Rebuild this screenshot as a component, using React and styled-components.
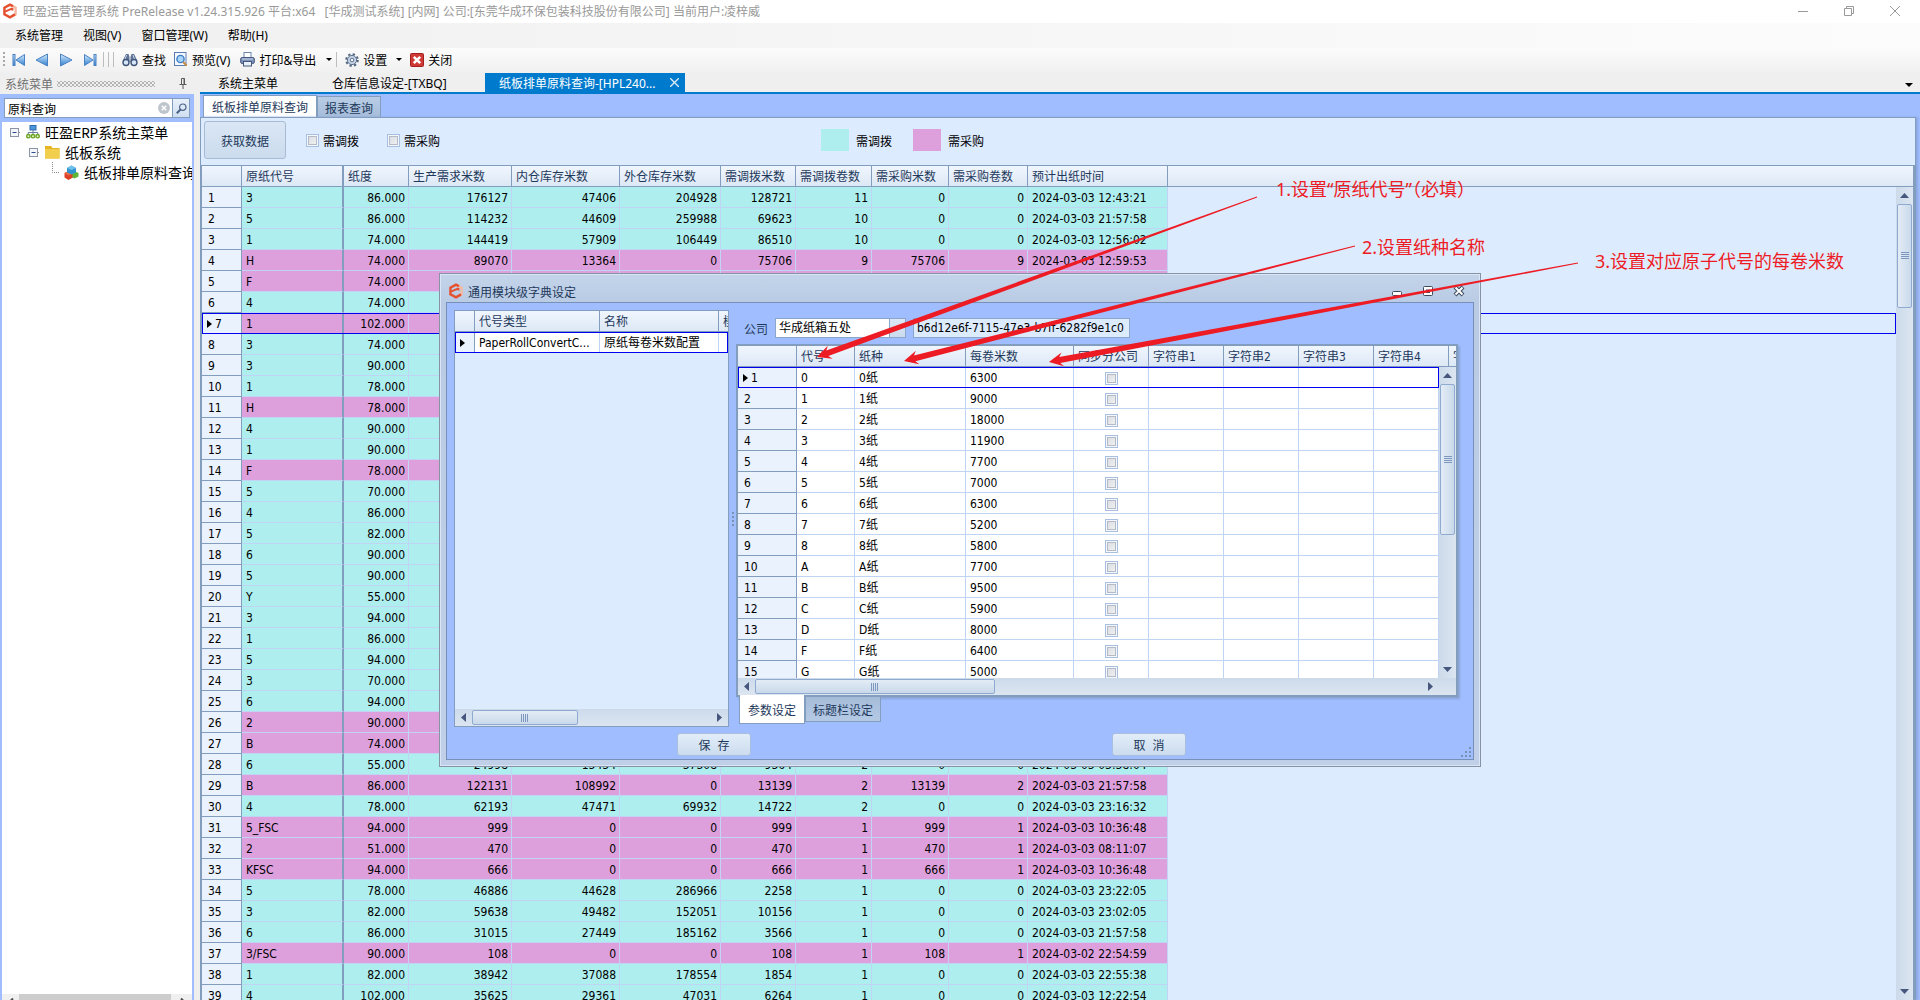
import React, { useState } from 'react'
import styled, { createGlobalStyle, css } from 'styled-components'

const GlobalStyle = createGlobalStyle`
  * {
    box-sizing: border-box;
  }
  body {
    margin: 0;
    overflow: hidden;
  }
  body, button, input, select {
    font-family: 'DejaVu Sans Condensed', 'Noto Sans CJK SC', sans-serif;
    font-size: 12px;
    color: #000;
  }
  button {
    padding: 0;
    border: 0;
    background: none;
  }
`

const colors = {
  frame: '#a0beff',
  panel: '#ddebff',
  line: '#839dbe',
  cellLine: '#c0d4f4',
  ink: '#1e395b',
  focus: '#0000f0',
  accent: '#007acc',
  transfer: '#afeeee',
  purchase: '#dda0dd',
  note: '#ed1c24'
}

const uiFont = "'Noto Sans', 'Noto Sans CJK SC', sans-serif"

/* ---------- shell ---------- */

const Window = styled.div`
  position: relative;
  display: flex;
  flex-direction: column;
  height: 100vh;
  overflow: hidden;
  background: #efefef;
`

const TitleBar = styled.header`
  display: flex;
  align-items: center;
  height: 23px;
  padding: 0 2px 2px 3px;
  background: #fff;
  color: #999;
  font-family: ${uiFont};
  white-space: pre;
`

const TitleText = styled.span`
  flex: 1;
  margin-left: 6px;
`

const CaptionButton = styled.button`
  width: 46px;
  height: 21px;
  display: flex;
  align-items: center;
  justify-content: center;
`

const MenuBar = styled.nav`
  display: flex;
  align-items: center;
  gap: 20px;
  height: 25px;
  padding: 0 0 2px 15px;
  background: linear-gradient(90deg, #f0f0f0, #fcfcfc);
`

const MenuItem = styled.button`
  font-family: ${uiFont};
`

const ToolBar = styled.div`
  display: flex;
  align-items: center;
  height: 25px;
  padding: 0 0 2px 3px;
  background: linear-gradient(#fcfcfc, #f0f0f0);
`

const ToolGrip = styled.span`
  width: 2px;
  height: 16px;
  margin-right: 3px;
  background: repeating-linear-gradient(#a8a8a8 0 2px, transparent 2px 4px);
`

const ToolButton = styled.button`
  display: flex;
  align-items: center;
  gap: 4px;
  height: 22px;
  padding: 0 4px;
  margin-right: ${(props) => props.$gap || 0}px;
  font-family: ${uiFont};
  white-space: nowrap;
`

const ToolSeparator = styled.span`
  width: 1px;
  height: 15px;
  margin-right: 4px;
  background: #bdbdbd;
`

const Main = styled.div`
  flex: 1;
  display: flex;
  min-height: 0;
`

/* ---------- side panel ---------- */

const SidePanel = styled.aside`
  display: flex;
  flex-direction: column;
  width: 194px;
  margin-right: 6px;
`

const SideHeader = styled.div`
  display: flex;
  align-items: center;
  gap: 4px;
  height: 21px;
  padding: 0 7px 0 5px;
  color: #717171;
  font-family: ${uiFont};
`

const SideDots = styled.span`
  width: 98px;
  height: 6px;
  margin-right: 20px;
  background-image: radial-gradient(#b4b4b4 30%, transparent 34%), radial-gradient(#b4b4b4 30%, transparent 34%);
  background-size: 4px 4px;
  background-position: 0 0, 2px 2px;
`

const SideBody = styled.div`
  flex: 1;
  display: flex;
  flex-direction: column;
  min-height: 0;
  padding: 4px 2px 0;
  background: ${colors.frame};
`

const SearchRow = styled.div`
  display: flex;
  height: 20px;
  margin: 0 2px 4px;
  border: 1px solid ${colors.line};
  background: #fff;
`

const SearchInput = styled.input`
  flex: 1;
  min-width: 0;
  border: 0;
  outline: 0;
  padding: 0 3px;
`

const IconButton = styled.button`
  display: flex;
  align-items: center;
  justify-content: center;
  width: 17px;
`

const SearchButton = styled(IconButton)`
  border-left: 1px solid ${colors.line};
  background: linear-gradient(#e8f1fb, #cfdff0);
`

const Tree = styled.ul`
  flex: 1;
  margin: 0;
  padding: 0;
  list-style: none;
  overflow: hidden;
  background: #fff;
  font-family: 'Liberation Mono', 'Noto Sans CJK SC', monospace;
  font-size: 14px;
`

const TreeItem = styled.li`
  display: flex;
  align-items: center;
  gap: 5px;
  height: 20px;
  padding-left: ${(props) => props.$level * 19 + 6}px;
  white-space: nowrap;

  svg {
    flex: none;
  }
`

const NativeScroll = styled.div`
  display: flex;
  justify-content: space-between;
  flex: none;
  height: 17px;
  margin-bottom: -11px;
  padding: 0 4px;
  background: linear-gradient(#cdcdcd, #cdcdcd) 17px 0 / 152px 17px no-repeat #f0f0f0;
`

/* ---------- documents ---------- */

const Documents = styled.main`
  flex: 1;
  display: flex;
  flex-direction: column;
  min-width: 0;
`

const DocStrip = styled.div`
  display: flex;
  height: 21px;
  padding-left: 4px;
  border-bottom: 2px solid ${colors.accent};
`

const DocTab = styled.button`
  display: flex;
  align-items: center;
  justify-content: space-between;
  width: ${(props) => props.$width}px;
  padding: 0 6px 0 14px;
  font-family: ${uiFont};
  white-space: nowrap;
  ${(props) => props.$active && css`
    background: ${colors.accent};
    color: #fff;
  `}
`

const DocMenu = styled(IconButton)`
  margin-left: auto;
  margin-right: 3px;
  padding-top: 4px;
`

const DocBody = styled.div`
  flex: 1;
  display: flex;
  flex-direction: column;
  min-height: 0;
  padding-right: 4px;
  background: ${colors.frame};
`

const PageTabs = styled.div`
  display: flex;
  align-items: flex-end;
  height: 23px;
  padding-left: 3px;
`

const PageTab = styled.button`
  height: ${(props) => (props.$active ? 22 : 21)}px;
  padding: 0 ${(props) => (props.$active ? 8 : 7)}px;
  border: 1px solid ${colors.line};
  border-bottom: 0;
  background: ${(props) => (props.$active ? '#fff' : 'linear-gradient(#b9cde6, #a5bcd9)')};
  color: ${colors.ink};
  white-space: nowrap;
`

const Page = styled.section`
  flex: 1;
  display: flex;
  flex-direction: column;
  min-height: 0;
  border: 1px solid ${colors.line};
  border-bottom: 0;
  background: ${colors.panel};
  box-shadow: 2px 0 2px #8ba7e0;
`

const FilterBar = styled.div`
  display: flex;
  align-items: center;
  height: 47px;
  padding: 0 3px 3px;
`

const FetchButton = styled.button`
  width: 82px;
  height: 38px;
  margin-right: 20px;
  border: 1px solid #a9bbd3;
  border-radius: 3px;
  background: linear-gradient(#dae6f4, #cbdcee);
  color: ${colors.ink};
`

const CheckLabel = styled.label`
  display: flex;
  align-items: center;
  gap: 4px;
  margin-right: 28px;
  white-space: nowrap;
`

const CheckBox = styled.input.attrs({ type: 'checkbox' })`
  appearance: none;
  flex: none;
  width: 13px;
  height: 13px;
  margin: 0;
  border: 1px solid #a9bfe2;
  background: linear-gradient(135deg, #d6dae0, #f4f4f4);
  box-shadow: inset 0 0 0 1px #f4f8fd, inset 0 0 0 2px #b4bbc6;
  vertical-align: middle;
`

const Legend = styled.div`
  display: flex;
  align-items: center;
  margin-left: 353px;
`

const Swatch = styled.span`
  width: 28px;
  height: 22px;
  margin-right: 7px;
  background: ${(props) => props.$color};
`

const LegendText = styled.span`
  margin-right: 21px;
  white-space: nowrap;
`

/* ---------- grids ---------- */

const GridFrame = styled.div`
  flex: 1;
  min-height: 0;
  display: flex;
  flex-direction: column;
  overflow: hidden;
  background: ${colors.panel};
  border: solid ${colors.line};
  border-width: ${(props) => props.$border};
`

const GridTable = styled.table`
  width: 100%;
  table-layout: fixed;
  border-collapse: separate;
  border-spacing: 0;
`

const HeadCell = styled.th`
  height: 21px;
  padding: 1px 0 0 4px;
  overflow: hidden;
  border-right: ${(props) => (props.$fixed ? 2 : 1)}px solid ${colors.line};
  border-bottom: 1px solid ${colors.line};
  background: linear-gradient(#f0f6fe, #dde8f6);
  color: ${colors.ink};
  font-weight: normal;
  line-height: 18px;
  text-align: left;
  white-space: nowrap;

  &:last-child {
    border-right: 0;
  }
`

const Cell = styled.td`
  height: 21px;
  padding: 2px 3px 0 4px;
  overflow: hidden;
  border-right: ${(props) => (props.$fixed ? `2px solid ${colors.line}` : `1px solid ${colors.cellLine}`)};
  border-bottom: 1px solid ${colors.cellLine};
  background: ${(props) => props.$fill || '#fff'};
  line-height: 18px;
  text-align: ${(props) => props.$align || 'left'};
  white-space: nowrap;
`

const IndexCell = styled.td`
  height: 21px;
  padding: 2px 0 0 6px;
  border-right: 1px solid ${colors.line};
  border-bottom: 1px solid ${colors.line};
  background: #eaf2fd;
  line-height: 18px;
  white-space: nowrap;

  svg {
    margin-right: 3px;
    margin-left: -1px;
  }
`

const Row = styled.tr`
  ${(props) => props.$current && css`
    outline: 1px solid ${colors.focus};
    outline-offset: -1px;
  `}
`

const GridScroller = styled.div`
  flex: 1;
  display: flex;
  min-height: 0;
`

const GridBody = styled.div`
  flex: 1;
  min-width: 0;
  overflow: hidden;
`

const VScroll = styled.div`
  display: flex;
  flex-direction: column;
  align-items: center;
  width: 17px;
  background: linear-gradient(90deg, #ccdaea, #dce6f1);
`

const HScroll = styled.div`
  display: flex;
  align-items: center;
  height: 17px;
  background: linear-gradient(#ccdaea, #dce6f1);
`

const ScrollArrow = styled.button`
  display: flex;
  align-items: center;
  justify-content: center;
  flex: none;
  width: 17px;
  height: 17px;
`

const Thumb = styled.div`
  display: flex;
  align-items: center;
  justify-content: center;
  flex: none;
  border: 1px solid #8faad0;
  border-radius: 2px;
  ${(props) => props.$vertical
    ? css`
      width: 15px;
      height: ${props.$size}px;
      margin-bottom: auto;
      background: linear-gradient(90deg, #e3ecf6, #c9d9ea);
    `
    : css`
      width: ${props.$size}px;
      height: 15px;
      margin-right: auto;
      background: linear-gradient(#e3ecf6, #c9d9ea);
    `}
`

/* ---------- dialog ---------- */

const DialogWindow = styled.section`
  position: absolute;
  left: 439px;
  top: 273px;
  display: flex;
  flex-direction: column;
  width: 1042px;
  height: 494px;
  padding: 0 6px 6px;
  border: 1px solid #8793a5;
  background: linear-gradient(#c3d4ea, #b9cbe4 30px, #bfd0e8);
  box-shadow: inset 0 0 0 1px #dae6f5;
`

const DialogTitle = styled.div`
  display: flex;
  align-items: center;
  height: 28px;
  padding: 6px 9px 0 3px;
  color: ${colors.ink};
`

const DialogTitleText = styled.span`
  flex: 1;
  margin-left: 5px;
`

const DialogButton = styled.button`
  display: flex;
  width: 12px;
  height: 12px;
  margin-left: 19px;
`

const DialogBody = styled.div`
  position: relative;
  flex: 1;
  display: flex;
  flex-direction: column;
  min-height: 0;
  padding: 7px;
  padding-bottom: 3px;
  border: 1px solid #7890b5;
  background: ${colors.frame};
`

const DialogPanes = styled.div`
  flex: 1;
  display: flex;
  min-height: 0;
`

const LeftPane = styled.div`
  display: flex;
  width: 275px;
`

const PaneSplitter = styled.div`
  display: flex;
  align-items: center;
  justify-content: center;
  width: 7px;

  &::before {
    content: '';
    width: 2px;
    height: 14px;
    background: repeating-linear-gradient(#7890b5 0 2px, transparent 2px 4px);
  }
`

const RightPane = styled.div`
  flex: 1;
  display: flex;
  flex-direction: column;
  min-width: 0;
  padding: 8px 8px 0 0;
`

const FormRow = styled.div`
  display: flex;
  align-items: center;
  height: 20px;
  margin-bottom: 6px;
  padding-left: 8px;
  color: ${colors.ink};
`

const Combo = styled.select`
  appearance: none;
  width: 131px;
  height: 20px;
  margin: 0 7px;
  padding: 0 3px;
  border: 1px solid #8ba5cb;
  border-radius: 0;
  background:
    linear-gradient(#8ba5cb, #8ba5cb) right 15px top / 1px 100% no-repeat,
    linear-gradient(#dce8f6, #cbdbed) right top / 15px 100% no-repeat,
    #fff;
`

const IdField = styled.input`
  width: 217px;
  height: 20px;
  padding: 0 3px;
  border: 1px solid #8ba5cb;
  background: #dcebfd;
`

const GridShadow = styled.div`
  flex: 1;
  display: flex;
  min-height: 0;
  box-shadow: 2px 2px 2px #8aa3d6;
`

const BottomTabs = styled.div`
  display: flex;
  align-items: flex-start;
  height: 30px;
  padding-left: 3px;
`

const BottomTab = styled.button`
  position: relative;
  height: ${(props) => (props.$active ? 29 : 25)}px;
  margin-top: ${(props) => (props.$active ? -2 : 0)}px;
  padding: 0 ${(props) => (props.$active ? 8 : 7)}px;
  border: 1px solid ${colors.line};
  border-top: 0;
  background: ${(props) => (props.$active ? '#fff' : 'linear-gradient(#a5bcd9, #b4c9e4)')};
  color: ${colors.ink};
  white-space: nowrap;
`

const DialogFooter = styled.div`
  display: flex;
  justify-content: center;
  gap: 361px;
  padding: 6px 57px 0 0;
`

const ActionButton = styled.button`
  width: 74px;
  height: 23px;
  border: 1px solid #a9bfdf;
  border-radius: 3px;
  background: linear-gradient(#e2edf9, #ccdcee);
  color: ${colors.ink};
  white-space: pre;
`

const SizeGrip = styled.svg`
  position: absolute;
  right: 0;
  bottom: 0;
`

/* ---------- notes ---------- */

const NoteLayer = styled.div`
  position: absolute;
  inset: 0;
  pointer-events: none;
`

const Note = styled.span`
  position: absolute;
  left: ${(props) => props.$x}px;
  top: ${(props) => props.$y}px;
  color: ${colors.note};
  font-family: ${uiFont};
  font-size: 18px;
  line-height: 26px;
  white-space: nowrap;
`

/* ---------- icons ---------- */

const LogoIcon = () => (
  <svg width='14' height='16' viewBox='0 0 14 16' fill='none' strokeWidth='2.4'>
    <path d='M7 1.6 L12.6 4.8 V11.2 L9.5 13' stroke='#f3b9a2' />
    <path d='M12 11.4 L7 14.4 L1.4 11.2 V4.8 L7 1.6 L10 3.2' stroke='#e5512f' />
    <path d='M2 8.6 L9.4 5.4 M9.4 5 V7.6' stroke='#e5512f' strokeWidth='2' />
  </svg>
)

const NavIcon = ({ back, bar }) => (
  <svg width='14' height='14' viewBox='0 0 14 14'>
    <defs>
      <linearGradient id='nav' x1='0' y1='0' x2='0' y2='1'>
        <stop offset='0' stopColor='#d6ecfb' />
        <stop offset='1' stopColor='#2f7fd0' />
      </linearGradient>
    </defs>
    <g transform={back ? '' : 'translate(14 0) scale(-1 1)'} fill='url(#nav)' stroke='#4a82c4' strokeWidth='1'>
      {bar && <rect x='1' y='1.5' width='2' height='11' />}
      <path d={bar ? 'M12.5 1.5 V12.5 L4 7 Z' : 'M12.5 1 V13 L1 7 Z'} />
    </g>
  </svg>
)

const FindIcon = () => (
  <svg width='16' height='14' viewBox='0 0 16 14'>
    <path d='M4 1 h2.5 l1 3 v5 H1 V7 Z M12 1 H9.5 l-1 3 v5 H15 V7 Z' fill='#5f7397' />
    <circle cx='4' cy='9.5' r='3' fill='#d7e6f7' stroke='#3f5479' strokeWidth='1.4' />
    <circle cx='12' cy='9.5' r='3' fill='#d7e6f7' stroke='#3f5479' strokeWidth='1.4' />
    <path d='M4.6 2 L3 6 M11 2 l1.4 4' stroke='#c8d5ea' strokeWidth='1' />
  </svg>
)

const PreviewIcon = () => (
  <svg width='14' height='15' viewBox='0 0 14 15'>
    <rect x='.5' y='.5' width='11.5' height='13' fill='#f5f9fe' stroke='#5b7db5' />
    <circle cx='6.5' cy='7' r='3.6' fill='#a9d6f8' stroke='#3c7cc8' strokeWidth='1.4' />
    <path d='M9.2 10 L12.6 13.6' stroke='#c98a3c' strokeWidth='2' />
  </svg>
)

const PrintIcon = () => (
  <svg width='15' height='15' viewBox='0 0 15 15'>
    <rect x='4' y='.5' width='7' height='6' fill='#fff' stroke='#6f86ad' />
    <rect x='.7' y='5.5' width='13.6' height='6' rx='1.5' fill='#7f93b8' stroke='#44587f' />
    <path d='M2 7 h11' stroke='#c9d6ec' />
    <rect x='3.5' y='9.5' width='8' height='4.5' fill='#e9f1fc' stroke='#44587f' />
  </svg>
)

const GearIcon = () => (
  <svg width='14' height='14' viewBox='0 0 14 14'>
    <circle cx='7' cy='7' r='5.8' fill='none' stroke='#51657f' strokeWidth='2' strokeDasharray='2.3 2.25' />
    <circle cx='7' cy='7' r='4.6' fill='#c6d3e4' stroke='#5d718f' strokeWidth='1' />
    <circle cx='7' cy='7' r='1.8' fill='#f8fbff' stroke='#5d718f' strokeWidth='1' />
  </svg>
)

const CloseRedIcon = () => (
  <svg width='14' height='14' viewBox='0 0 14 14'>
    <rect x='.5' y='.5' width='13' height='13' rx='1' fill='#cf3a36' stroke='#a3201f' />
    <path d='M3.8 3.8 L10.2 10.2 M10.2 3.8 L3.8 10.2' stroke='#fff' strokeWidth='2.6' />
  </svg>
)

const CaretIcon = ({ size = 7 }) => (
  <svg width={size} height={size / 2} viewBox='0 0 8 4'>
    <path d='M0 0 H8 L4 4 Z' fill='#000' />
  </svg>
)

const PinIcon = () => (
  <svg width='8' height='11' viewBox='0 0 8 11' fill='none' stroke='#5a5a5a'>
    <path d='M2.5 6 V.5 H5.5 V6 M5 .5 V6 M.5 6.5 H7.5 M4 7 V11' />
  </svg>
)

const ClearIcon = () => (
  <svg width='12' height='12' viewBox='0 0 12 12'>
    <circle cx='6' cy='6' r='6' fill='#bfc5cd' />
    <path d='M3.8 3.8 L8.2 8.2 M8.2 3.8 L3.8 8.2' stroke='#fff' strokeWidth='1.6' />
  </svg>
)

const LensIcon = () => (
  <svg width='11' height='11' viewBox='0 0 11 11' fill='none' stroke='#4b6286'>
    <circle cx='6.8' cy='4.2' r='3.2' strokeWidth='1.2' />
    <path d='M4.5 6.5 L.8 10.2' strokeWidth='2' />
  </svg>
)

const ExpandIcon = () => (
  <svg width='13' height='20' viewBox='0 0 13 20' fill='none'>
    <rect x='2.5' y='6.5' width='8' height='8' fill='#f4f6fa' stroke='#8a94a4' />
    <path d='M4.5 10.5 H8.5' stroke='#2d4b8e' />
    <path d='M11 10.5 H13' stroke='#888' strokeDasharray='1 1' />
  </svg>
)

const BranchIcon = () => (
  <svg width='13' height='20' viewBox='0 0 13 20' fill='none'>
    <path d='M6.5 0 V10.5 H13' stroke='#888' strokeDasharray='1 1' />
  </svg>
)

const NetworkIcon = () => (
  <svg width='14' height='14' viewBox='0 0 14 14' fill='none'>
    <rect x='4' y='.5' width='6' height='4.5' fill='#4d96dc' stroke='#2f6db0' />
    <path d='M7 5 V9 M2.2 9.5 V7.5 H11.8 V9.5' stroke='#6a7fa0' />
    <circle cx='2.4' cy='11.2' r='1.7' fill='#e6f5c9' stroke='#6aa321' strokeWidth='1.4' />
    <circle cx='7' cy='11.2' r='1.7' fill='#e6f5c9' stroke='#6aa321' strokeWidth='1.4' />
    <circle cx='11.6' cy='11.2' r='1.7' fill='#e6f5c9' stroke='#6aa321' strokeWidth='1.4' />
  </svg>
)

const FolderIcon = () => (
  <svg width='15' height='14' viewBox='0 0 15 14'>
    <path d='M0 1 H6 L7.5 3 H14.5 V13.5 H0 Z' fill='#e6b422' />
    <path d='M0 4 H14.5 V13.5 H0 Z' fill='#f1ce4c' />
  </svg>
)

const CubesIcon = () => (
  <svg width='15' height='15' viewBox='0 0 15 15'>
    <path d='M.5 8 L4.5 6 L9 8.5 V12.5 L4.5 15 L.5 12.5 Z' fill='#dd4226' />
    <path d='M.5 8 L4.5 6 L9 8.5 L4.5 10.5 Z' fill='#f0714a' />
    <path d='M8.5 9 L11 6.5 L14.5 8 V11.5 L10.5 13.5 L8.5 12.5 Z' fill='#5db535' />
    <path d='M3 3 L7.5 .5 L12 3 V7.5 L7.5 9.5 L3 7.5 Z' fill='#2f94cf' />
    <path d='M3 3 L7.5 .5 L12 3 L7.5 5 Z' fill='#71c2ea' />
  </svg>
)

const arrowPaths = {
  up: 'M0 7 H9 L4.5 2 Z',
  down: 'M0 2 H9 L4.5 7 Z',
  left: 'M7 0 V9 L2 4.5 Z',
  right: 'M2 0 V9 L7 4.5 Z'
}

const Arrow = ({ to }) => (
  <svg width='9' height='9' viewBox='0 0 9 9'>
    <path d={arrowPaths[to]} fill='#46567c' />
  </svg>
)

const ThinArrow = ({ to }) => (
  <svg width='9' height='17' viewBox='0 0 9 17' fill='none' stroke='#505050' strokeWidth='2'>
    <path d={to === 'left' ? 'M7 4.5 L3 8.5 L7 12.5' : 'M2 4.5 L6 8.5 L2 12.5'} />
  </svg>
)

const ThumbGrip = ({ vertical }) => (
  <svg width='8' height='8' viewBox='0 0 8 8' stroke='#7d97bf'>
    <path d={vertical ? 'M0 .5 H8 M0 2.5 H8 M0 4.5 H8 M0 6.5 H8' : 'M.5 0 V8 M2.5 0 V8 M4.5 0 V8 M6.5 0 V8'} />
  </svg>
)

const RowMarker = () => (
  <svg width='5' height='8' viewBox='0 0 5 8'>
    <path d='M0 0 L5 4 L0 8 Z' fill='#000' />
  </svg>
)

/* ---------- data ---------- */

const stockColumns = [
  { title: '原纸代号', width: 102, fixed: true },
  { title: '纸度', width: 65, align: 'right' },
  { title: '生产需求米数', width: 103, align: 'right' },
  { title: '内仓库存米数', width: 108, align: 'right' },
  { title: '外仓库存米数', width: 101, align: 'right' },
  { title: '需调拨米数', width: 75, align: 'right' },
  { title: '需调拨卷数', width: 76, align: 'right' },
  { title: '需采购米数', width: 77, align: 'right' },
  { title: '需采购卷数', width: 79, align: 'right' },
  { title: '预计出纸时间', width: 140 }
]

const stockRows = [
  ['3', '86.000', '176127', '47406', '204928', '128721', '11', '0', '0', '2024-03-03 12:43:21'],
  ['5', '86.000', '114232', '44609', '259988', '69623', '10', '0', '0', '2024-03-03 21:57:58'],
  ['1', '74.000', '144419', '57909', '106449', '86510', '10', '0', '0', '2024-03-03 12:56:02'],
  ['H', '74.000', '89070', '13364', '0', '75706', '9', '75706', '9', '2024-03-03 12:59:53'],
  ['F', '74.000'],
  ['4', '74.000'],
  ['1', '102.000'],
  ['3', '74.000'],
  ['3', '90.000'],
  ['1', '78.000'],
  ['H', '78.000'],
  ['4', '90.000'],
  ['1', '90.000'],
  ['F', '78.000'],
  ['5', '70.000'],
  ['4', '86.000'],
  ['5', '82.000'],
  ['6', '90.000'],
  ['5', '90.000'],
  ['Y', '55.000'],
  ['3', '94.000'],
  ['1', '86.000'],
  ['5', '94.000'],
  ['3', '70.000'],
  ['6', '94.000'],
  ['2', '90.000'],
  ['B', '74.000'],
  ['6', '55.000', '24998', '13434', '37308', '9364', '2', '0', '0', '2024-03-03 03:38:04'],
  ['B', '86.000', '122131', '108992', '0', '13139', '2', '13139', '2', '2024-03-03 21:57:58'],
  ['4', '78.000', '62193', '47471', '69932', '14722', '2', '0', '0', '2024-03-03 23:16:32'],
  ['5_FSC', '94.000', '999', '0', '0', '999', '1', '999', '1', '2024-03-03 10:36:48'],
  ['2', '51.000', '470', '0', '0', '470', '1', '470', '1', '2024-03-03 08:11:07'],
  ['KFSC', '94.000', '666', '0', '0', '666', '1', '666', '1', '2024-03-03 10:36:48'],
  ['5', '78.000', '46886', '44628', '286966', '2258', '1', '0', '0', '2024-03-03 23:22:05'],
  ['3', '82.000', '59638', '49482', '152051', '10156', '1', '0', '0', '2024-03-03 23:02:05'],
  ['6', '86.000', '31015', '27449', '185162', '3566', '1', '0', '0', '2024-03-03 21:57:58'],
  ['3/FSC', '90.000', '108', '0', '0', '108', '1', '108', '1', '2024-03-02 22:54:59'],
  ['1', '82.000', '38942', '37088', '178554', '1854', '1', '0', '0', '2024-03-03 22:55:38'],
  ['4', '102.000', '35625', '29361', '47031', '6264', '1', '0', '0', '2024-03-03 12:22:54']
]

const purchaseRows = [4, 5, 7, 11, 14, 26, 27, 29, 31, 32, 33, 37]

const paramColumns = [
  { title: '代号', width: 58 },
  { title: '纸种', width: 111 },
  { title: '每卷米数', width: 108 },
  { title: '同步分公司', width: 75 },
  { title: '字符串1', width: 75 },
  { title: '字符串2', width: 75 },
  { title: '字符串3', width: 75 },
  { title: '字符串4', width: 75 }
]

const paramRows = [
  ['0', '6300'], ['1', '9000'], ['2', '18000'], ['3', '11900'], ['4', '7700'],
  ['5', '7000'], ['6', '6300'], ['7', '5200'], ['8', '5800'], ['A', '7700'],
  ['B', '9500'], ['C', '5900'], ['D', '8000'], ['F', '6400'], ['G', '5000']
]

const notes = [
  { text: '1.设置“原纸代号”（必填）', x: 1276, y: 176, tail: [1257, 197], tip: [817, 357] },
  { text: '2.设置纸种名称', x: 1362, y: 234, tail: [1355, 246], tip: [904, 361] },
  { text: '3.设置对应原子代号的每卷米数', x: 1595, y: 248, tail: [1578, 263], tip: [1049, 362] }
]

/* ---------- parts ---------- */

const StockGrid = () => {
  const cols = (
    <colgroup>
      <col width='40' />
      {stockColumns.map((column) => <col key={column.title} width={column.width} />)}
      <col />
    </colgroup>
  )

  return (
    <GridFrame $border='1px 2px 0 1px'>
      <GridTable>
        {cols}
        <thead>
          <tr>
            <HeadCell />
            {stockColumns.map((column) => (
              <HeadCell key={column.title} $fixed={column.fixed}>{column.title}</HeadCell>
            ))}
            <HeadCell />
          </tr>
        </thead>
      </GridTable>
      <GridScroller>
        <GridBody>
          <GridTable>
            {cols}
            <tbody>
              {stockRows.map((row, i) => {
                const fill = purchaseRows.includes(i + 1) ? colors.purchase : colors.transfer
                return (
                  <Row key={i} $current={i === 6}>
                    <IndexCell>{i === 6 && <RowMarker />}{i + 1}</IndexCell>
                    {stockColumns.map((column, j) => (
                      <Cell key={column.title} $fill={fill} $fixed={column.fixed} $align={column.align}>{row[j]}</Cell>
                    ))}
                    <td />
                  </Row>
                )
              })}
            </tbody>
          </GridTable>
        </GridBody>
        <VScroll>
          <ScrollArrow aria-label='上'><Arrow to='up' /></ScrollArrow>
          <Thumb $vertical $size={104}><ThumbGrip vertical /></Thumb>
          <ScrollArrow aria-label='下'><Arrow to='down' /></ScrollArrow>
        </VScroll>
      </GridScroller>
    </GridFrame>
  )
}

const TypeGrid = () => (
  <GridFrame $border='1px'>
    <GridBody>
      <GridTable>
        <colgroup>
          <col width='20' />
          <col width='125' />
          <col width='119' />
          <col />
        </colgroup>
        <thead>
          <tr>
            <HeadCell />
            <HeadCell>代号类型</HeadCell>
            <HeadCell>名称</HeadCell>
            <HeadCell>模块</HeadCell>
          </tr>
        </thead>
        <tbody>
          <Row $current>
            <IndexCell><RowMarker /></IndexCell>
            <Cell>PaperRollConvertC...</Cell>
            <Cell>原纸每卷米数配置</Cell>
            <Cell />
          </Row>
        </tbody>
      </GridTable>
    </GridBody>
    <HScroll>
      <ScrollArrow aria-label='左'><Arrow to='left' /></ScrollArrow>
      <Thumb $size={106}><ThumbGrip /></Thumb>
      <ScrollArrow aria-label='右'><Arrow to='right' /></ScrollArrow>
    </HScroll>
  </GridFrame>
)

const ParamGrid = () => (
  <GridFrame $border='2px'>
    <GridTable>
      <colgroup>
        <col width='59' />
        {paramColumns.map((column) => <col key={column.title} width={column.width} />)}
        <col />
      </colgroup>
      <thead>
        <tr>
          <HeadCell />
          {paramColumns.map((column) => <HeadCell key={column.title}>{column.title}</HeadCell>)}
          <HeadCell>字符串5</HeadCell>
        </tr>
      </thead>
    </GridTable>
    <GridScroller>
      <GridBody>
        <GridTable>
          <colgroup>
            <col width='59' />
            {paramColumns.slice(0, -1).map((column) => <col key={column.title} width={column.width} />)}
            <col />
          </colgroup>
          <tbody>
            {paramRows.map(([code, meters], i) => (
              <Row key={code} $current={i === 0}>
                <IndexCell>{i === 0 && <RowMarker />}{i + 1}</IndexCell>
                <Cell>{code}</Cell>
                <Cell>{code}纸</Cell>
                <Cell>{meters}</Cell>
                <Cell $align='center'><CheckBox aria-label={`同步分公司 ${code}`} /></Cell>
                <Cell />
                <Cell />
                <Cell />
                <Cell />
              </Row>
            ))}
          </tbody>
        </GridTable>
      </GridBody>
      <VScroll>
        <ScrollArrow aria-label='上'><Arrow to='up' /></ScrollArrow>
        <Thumb $vertical $size={151}><ThumbGrip vertical /></Thumb>
        <ScrollArrow aria-label='下'><Arrow to='down' /></ScrollArrow>
      </VScroll>
    </GridScroller>
    <HScroll>
      <ScrollArrow aria-label='左'><Arrow to='left' /></ScrollArrow>
      <Thumb $size={240}><ThumbGrip /></Thumb>
      <ScrollArrow aria-label='右'><Arrow to='right' /></ScrollArrow>
      <ScrollArrow as='span' />
    </HScroll>
  </GridFrame>
)

const DictionaryDialog = () => (
  <DialogWindow role='dialog' aria-label='通用模块级字典设定'>
    <DialogTitle>
      <LogoIcon />
      <DialogTitleText>通用模块级字典设定</DialogTitleText>
      <DialogButton aria-label='最小化'>
        <svg width='12' height='12' viewBox='0 0 12 12'>
          <rect x='1.5' y='6.5' width='9' height='4' rx='1' fill='#fff' stroke='#3c4a5e' />
        </svg>
      </DialogButton>
      <DialogButton aria-label='最大化'>
        <svg width='12' height='12' viewBox='0 0 12 12'>
          <rect x='1.5' y='1.5' width='9' height='9' rx='1' fill='#fff' stroke='#3c4a5e' />
          <rect x='4.5' y='5' width='3' height='2.5' fill='#b9cbe4' stroke='#3c4a5e' />
        </svg>
      </DialogButton>
      <DialogButton aria-label='关闭'>
        <svg width='12' height='12' viewBox='0 0 12 12' fill='none'>
          <path d='M2 2 L10 10 M10 2 L2 10' stroke='#3c4a5e' strokeWidth='4' />
          <path d='M2.5 2.5 L9.5 9.5 M9.5 2.5 L2.5 9.5' stroke='#fff' strokeWidth='2' />
        </svg>
      </DialogButton>
    </DialogTitle>
    <DialogBody>
      <DialogPanes>
        <LeftPane><TypeGrid /></LeftPane>
        <PaneSplitter />
        <RightPane>
          <FormRow>
            <label htmlFor='company'>公司</label>
            <Combo id='company'>
              <option>华成纸箱五处</option>
            </Combo>
            <IdField aria-label='公司编号' readOnly defaultValue='b6d12e6f-7115-47e3-b7ff-6282f9e1c0' />
          </FormRow>
          <GridShadow><ParamGrid /></GridShadow>
          <BottomTabs>
            <BottomTab $active>参数设定</BottomTab>
            <BottomTab>标题栏设定</BottomTab>
          </BottomTabs>
        </RightPane>
      </DialogPanes>
      <DialogFooter>
        <ActionButton>保  存</ActionButton>
        <ActionButton>取  消</ActionButton>
      </DialogFooter>
      <SizeGrip width='12' height='12' viewBox='0 0 12 12' fill='#7890b5'>
        <path d='M8 0h2v2h-2z M4 4h2v2h-2z M8 4h2v2h-2z M0 8h2v2h-2z M4 8h2v2h-2z M8 8h2v2h-2z' />
      </SizeGrip>
    </DialogBody>
  </DialogWindow>
)

// Tapered pointer: hairline at the tail, wide where it meets the head
const pointer = ([tx, ty], [px, py]) => {
  const length = Math.hypot(px - tx, py - ty)
  const ux = (px - tx) / length
  const uy = (py - ty) / length
  const at = (back, side) => `${px - ux * back - uy * side},${py - uy * back + ux * side}`
  return [
    at(length, 0.5), at(11, 3), at(14, 7), at(0, 0), at(14, -7), at(11, -3), at(length, -0.5)
  ].join(' ')
}

const Notes = () => (
  <NoteLayer>
    <svg width='100%' height='100%'>
      {notes.map((note) => (
        <polygon key={note.text} points={pointer(note.tail, note.tip)} fill={colors.note} />
      ))}
    </svg>
    {notes.map((note) => <Note key={note.text} $x={note.x} $y={note.y}>{note.text}</Note>)}
  </NoteLayer>
)

const App = () => {
  const [keyword, setKeyword] = useState('原料查询')

  return (
    <Window>
      <GlobalStyle />
      <TitleBar>
        <LogoIcon />
        <TitleText>旺盈运营管理系统 PreRelease v1.24.315.926 平台:x64   [华成测试系统] [内网] 公司:[东莞华成环保包装科技股份有限公司] 当前用户:凌梓威</TitleText>
        <CaptionButton aria-label='最小化'>
          <svg width='10' height='10' stroke='#999'><path d='M0 5.5 H10' /></svg>
        </CaptionButton>
        <CaptionButton aria-label='还原'>
          <svg width='10' height='10' fill='none' stroke='#999'><path d='M.5 2.5 H7.5 V9.5 H.5 Z M2.5 2.5 V.5 H9.5 V7.5 H7.5' /></svg>
        </CaptionButton>
        <CaptionButton aria-label='关闭'>
          <svg width='10' height='10' stroke='#999'><path d='M0 0 L10 10 M10 0 L0 10' /></svg>
        </CaptionButton>
      </TitleBar>
      <MenuBar>
        <MenuItem>系统管理</MenuItem>
        <MenuItem>视图(V)</MenuItem>
        <MenuItem>窗口管理(W)</MenuItem>
        <MenuItem>帮助(H)</MenuItem>
      </MenuBar>
      <ToolBar>
        <ToolGrip />
        <ToolButton aria-label='首条' $gap={1}><NavIcon back bar /></ToolButton>
        <ToolButton aria-label='上一条' $gap={2}><NavIcon back /></ToolButton>
        <ToolButton aria-label='下一条' $gap={2}><NavIcon /></ToolButton>
        <ToolButton aria-label='末条' $gap={2}><NavIcon bar /></ToolButton>
        <ToolSeparator />
        <ToolSeparator />
        <ToolSeparator />
        <ToolButton><FindIcon />查找</ToolButton>
        <ToolButton $gap={2}><PreviewIcon />预览(V)</ToolButton>
        <ToolButton $gap={2}><PrintIcon />打印&amp;导出</ToolButton>
        <ToolButton aria-label='更多打印'><CaretIcon size={6} /></ToolButton>
        <ToolSeparator />
        <ToolButton $gap={1}><GearIcon />设置</ToolButton>
        <ToolButton aria-label='更多设置'><CaretIcon size={6} /></ToolButton>
        <ToolButton><CloseRedIcon />关闭</ToolButton>
      </ToolBar>
      <Main>
        <SidePanel>
          <SideHeader>
            系统菜单
            <SideDots />
            <PinIcon />
          </SideHeader>
          <SideBody>
            <SearchRow>
              <SearchInput aria-label='搜索菜单' value={keyword} onChange={(e) => setKeyword(e.target.value)} />
              <IconButton aria-label='清除' onClick={() => setKeyword('')}><ClearIcon /></IconButton>
              <SearchButton aria-label='搜索'><LensIcon /></SearchButton>
            </SearchRow>
            <Tree>
              <TreeItem $level={0}><ExpandIcon /><NetworkIcon />旺盈ERP系统主菜单</TreeItem>
              <TreeItem $level={1}><ExpandIcon /><FolderIcon />纸板系统</TreeItem>
              <TreeItem $level={2}><BranchIcon /><CubesIcon />纸板排单原料查询</TreeItem>
            </Tree>
            <NativeScroll>
              <ThinArrow to='left' />
              <ThinArrow to='right' />
            </NativeScroll>
          </SideBody>
        </SidePanel>
        <Documents>
          <DocStrip>
            <DocTab $width={114}>系统主菜单</DocTab>
            <DocTab $width={167}>仓库信息设定-[TXBQ]</DocTab>
            <DocTab $width={200} $active>
              纸板排单原料查询-[HPL240...
              <svg width='9' height='9' stroke='#d6eaf8' strokeWidth='1.4'><path d='M0 0 L9 9 M9 0 L0 9' /></svg>
            </DocTab>
            <DocMenu aria-label='窗口列表'><CaretIcon size={8} /></DocMenu>
          </DocStrip>
          <DocBody>
            <PageTabs>
              <PageTab $active>纸板排单原料查询</PageTab>
              <PageTab>报表查询</PageTab>
            </PageTabs>
            <Page>
              <FilterBar>
                <FetchButton>获取数据</FetchButton>
                <CheckLabel><CheckBox />需调拨</CheckLabel>
                <CheckLabel><CheckBox />需采购</CheckLabel>
                <Legend>
                  <Swatch $color={colors.transfer} />
                  <LegendText>需调拨</LegendText>
                  <Swatch $color={colors.purchase} />
                  <LegendText>需采购</LegendText>
                </Legend>
              </FilterBar>
              <StockGrid />
            </Page>
          </DocBody>
        </Documents>
      </Main>
      <DictionaryDialog />
      <Notes />
    </Window>
  )
}

export default App
